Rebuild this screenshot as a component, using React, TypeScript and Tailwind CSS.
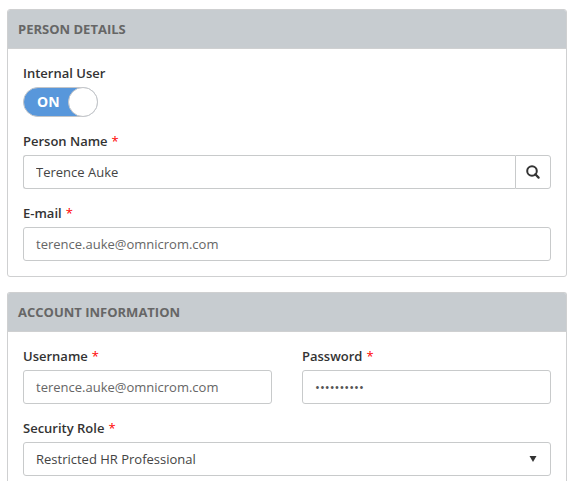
import { useState, type ReactNode } from "react";

const fieldClass =
  "block h-[34px] w-full min-w-0 border border-[#c8cacb] bg-white px-3 text-[13px] outline-none focus:border-[#5897db]";

function Panel({ title, open = false, children }: { title: string; open?: boolean; children: ReactNode }) {
  return (
    <section
      className={
        open
          ? "rounded-t-[3px] border border-b-0 border-[#cfd0d1]"
          : "rounded-[3px] border border-[#cfd0d1]"
      }
    >
      <h2 className="rounded-t-[2px] border-b border-[#cfd0d1] bg-[#c7ccd0] px-[10px] py-[9px] text-[13px] leading-5 font-bold text-[#666666]">
        {title}
      </h2>
      <div className={open ? "flex flex-col gap-[15px] px-[15px] pt-[15px] pb-[5px]" : "flex flex-col gap-[15px] p-[15px]"}>
        {children}
      </div>
    </section>
  );
}

function Field({
  id,
  label,
  required = false,
  children,
}: {
  id: string;
  label: string;
  required?: boolean;
  children: ReactNode;
}) {
  return (
    <div className="flex min-w-0 flex-1 flex-col gap-[5px]">
      <label htmlFor={id} className="text-[13px] leading-[18px] font-semibold text-[#333333]">
        {label}
        {required && <span className="ml-1 font-normal text-[#ff0000]">*</span>}
      </label>
      {children}
    </div>
  );
}

function Toggle({ id }: { id: string }) {
  const [on, setOn] = useState(true);
  return (
    <div className="relative h-[30px] w-[75px]">
      <input
        id={id}
        type="checkbox"
        role="switch"
        checked={on}
        onChange={(e) => setOn(e.target.checked)}
        className="peer block h-full w-full cursor-pointer appearance-none rounded-full border border-[#c3c5c8] bg-[#d5d7d9] checked:bg-[#5897db]"
      />
      <span
        className={
          on
            ? "pointer-events-none absolute inset-y-0 left-[14px] flex items-center text-sm font-bold text-white"
            : "pointer-events-none absolute inset-y-0 right-[12px] flex items-center text-sm font-bold text-[#666666]"
        }
      >
        {on ? "ON" : "OFF"}
      </span>
      <span className="pointer-events-none absolute top-0 left-0 size-[30px] rounded-full border border-[#c3c5c8] bg-white peer-checked:left-[45px]" />
    </div>
  );
}

export default function App() {
  return (
    <main className="flex flex-col gap-[15px] bg-white pt-[9px] pr-2 pl-[7px] font-['Open_Sans','Noto_Sans',sans-serif]">
      <Panel title="PERSON DETAILS">
        <Field id="internal" label="Internal User">
          <Toggle id="internal" />
        </Field>
        <Field id="person" label="Person Name" required>
          <div className="flex">
            <input
              id="person"
              type="text"
              defaultValue="Terence Auke"
              className={`${fieldClass} flex-1 rounded-l-[3px] border-r-0 text-[#444444]`}
            />
            <button
              type="button"
              aria-label="Search"
              className="flex h-[34px] w-9 items-center justify-center rounded-r-[3px] border border-[#c8cacb] text-[#333333]"
            >
              <svg viewBox="0 0 14 14" className="size-[14px]" fill="none" stroke="currentColor" aria-hidden="true">
                <circle cx="6" cy="6" r="4.8" strokeWidth="2" />
                <path d="M9.3 9.3 L12.6 12.6" strokeWidth="2.2" strokeLinecap="round" />
              </svg>
            </button>
          </div>
        </Field>
        <Field id="email" label="E-mail" required>
          <input id="email" type="email" defaultValue="terence.auke@omnicrom.com" className={`${fieldClass} rounded-[3px] text-[#666666]`} />
        </Field>
      </Panel>

      <Panel title="ACCOUNT INFORMATION" open>
        <div className="flex gap-[30px]">
          <Field id="username" label="Username" required>
            <input id="username" type="text" defaultValue="terence.auke@omnicrom.com" className={`${fieldClass} rounded-[3px] text-[#666666]`} />
          </Field>
          <Field id="password" label="Password" required>
            <input id="password" type="password" defaultValue="0123456789" className={`${fieldClass} rounded-[3px] text-[#555555]`} />
          </Field>
        </div>
        <Field id="role" label="Security Role" required>
          <div className="relative">
            <select id="role" defaultValue="restricted" className={`${fieldClass} appearance-none rounded-[3px] pt-[2px] pr-8 text-[#444444]`}>
              <option value="restricted">Restricted HR Professional</option>
            </select>
            <svg
              viewBox="0 0 8 6"
              className="pointer-events-none absolute top-[14px] right-[14px] h-[6px] w-2 fill-[#333333]"
              aria-hidden="true"
            >
              <path d="M0.5 0 H7.5 L4 6 Z" />
            </svg>
          </div>
        </Field>
      </Panel>
    </main>
  );
}
